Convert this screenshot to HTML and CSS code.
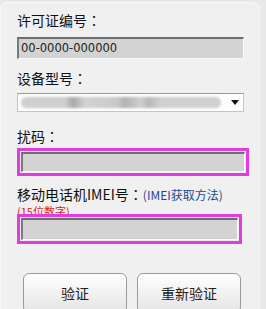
FILE: index.html
```html
<!DOCTYPE html>
<html lang="zh-CN">
<head>
    <meta charset="UTF-8">
    <meta name="viewport" content="width=device-width, initial-scale=1.0">
    <title>验证</title>
    <link rel="stylesheet" href="styles.css">
</head>
<body>
    <div class="panel">
        <div class="label first">许可证编号<span class="colon" lang="ja">：</span></div>
        <div class="field lic">00-0000-000000</div>

        <div class="label model">设备型号<span class="colon" lang="ja">：</span></div>
        <div class="select">
            <span class="blur"></span>
            <span class="arrow"></span>
        </div>

        <div class="label code">扰码<span class="colon" lang="ja">：</span></div>
        <div class="hl hl-code">
            <div class="field"></div>
        </div>

        <div class="label imei">移动电话机IMEI号<span class="colon" lang="ja">：</span><a class="help">(IMEI获取方法)</a></div>
        <div class="note">(15位数字)</div>
        <div class="hl hl-imei">
            <div class="field"></div>
        </div>

        <div class="btns">
            <button>验证</button>
            <button>重新验证</button>
        </div>
    </div>
</body>
</html>
```

FILE: styles.css
```css
html, body {
    height: 309px;
}
body {
    margin: 0;
    background-color: #e8e8e8;
    font-family: "Noto Sans CJK SC", "DejaVu Sans", sans-serif;
    overflow: hidden;
}
.panel {
    margin: 2px 6px 0 0;
    height: 330px;
    padding: 7px 0 0 16px;
    border: 1px solid #f8f8f8;
    border-radius: 6px;
    background-color: #f0f0f0;
}
.label {
    font-size: 14px;
    line-height: 20px;
    color: #111;
}
.colon {
    font-family: "Noto Sans CJK JP", sans-serif;
}
.model {
    margin-top: 9px;
}
.code {
    margin-top: 14px;
}
.imei {
    margin-top: 8px;
}
.field {
    box-sizing: border-box;
    height: 20px;
    background-color: #d3d3d3;
    border-top: 2px solid #6e6e6e;
    border-left: 2px solid #7a7a7a;
    border-right: 1px solid #fafafa;
    border-bottom: 1px solid #fafafa;
}
.lic {
    width: 227px;
    height: 22px;
    margin-top: 7px;
    padding-left: 2px;
    font-family: "DejaVu Sans", sans-serif;
    font-size: 11.5px;
    line-height: 19px;
    color: #222;
}
.select {
    box-sizing: border-box;
    width: 227px;
    height: 19px;
    margin-top: 5px;
    padding: 0 4px 0 3px;
    display: flex;
    align-items: center;
    background-color: #fdfdfd;
    border: 1px solid #c4c4c4;
    border-top-color: #9a9a9a;
}
.blur {
    flex: 1;
    height: 11px;
    margin-right: 10px;
    border-radius: 6px;
    background: linear-gradient(90deg, #cfcfcf 0 22%, #a9a9a9 26%, #d2d2d2 32%, #c9c9c9 48%, #b2b2b2 52%, #cfcfcf 60%, #b8b8b8 64%, #d0d0d0 70%);
    filter: blur(1px);
}
.arrow {
    width: 0;
    height: 0;
    border-top: 5px solid #111;
    border-left: 4px solid transparent;
    border-right: 4px solid transparent;
}
.hl {
    position: relative;
    border: 3px solid #e23be2;
    padding: 1px;
    background-color: #ececec;
}
.hl-code {
    width: 224px;
    margin-top: 2px;
}
.hl-code .field {
    height: 20px;
}
.hl-imei {
    width: 217px;
    margin-top: -4px;
}
.hl-imei .field {
    height: 22px;
}
.help {
    font-size: 12px;
    color: #1f4790;
}
.note {
    margin-top: -1px;
    font-size: 11px;
    line-height: 14px;
    color: #e02020;
}
.btns {
    display: flex;
    gap: 10px;
    margin: 29px 0 0 6px;
}
button {
    width: 104px;
    height: 40px;
    border: 1px solid #9c9c9c;
    border-radius: 6px;
    background: linear-gradient(#ffffff, #e4e4e4);
    font-family: "Noto Sans CJK SC", sans-serif;
    font-size: 14px;
    color: #222;
    padding: 0;
}
```
